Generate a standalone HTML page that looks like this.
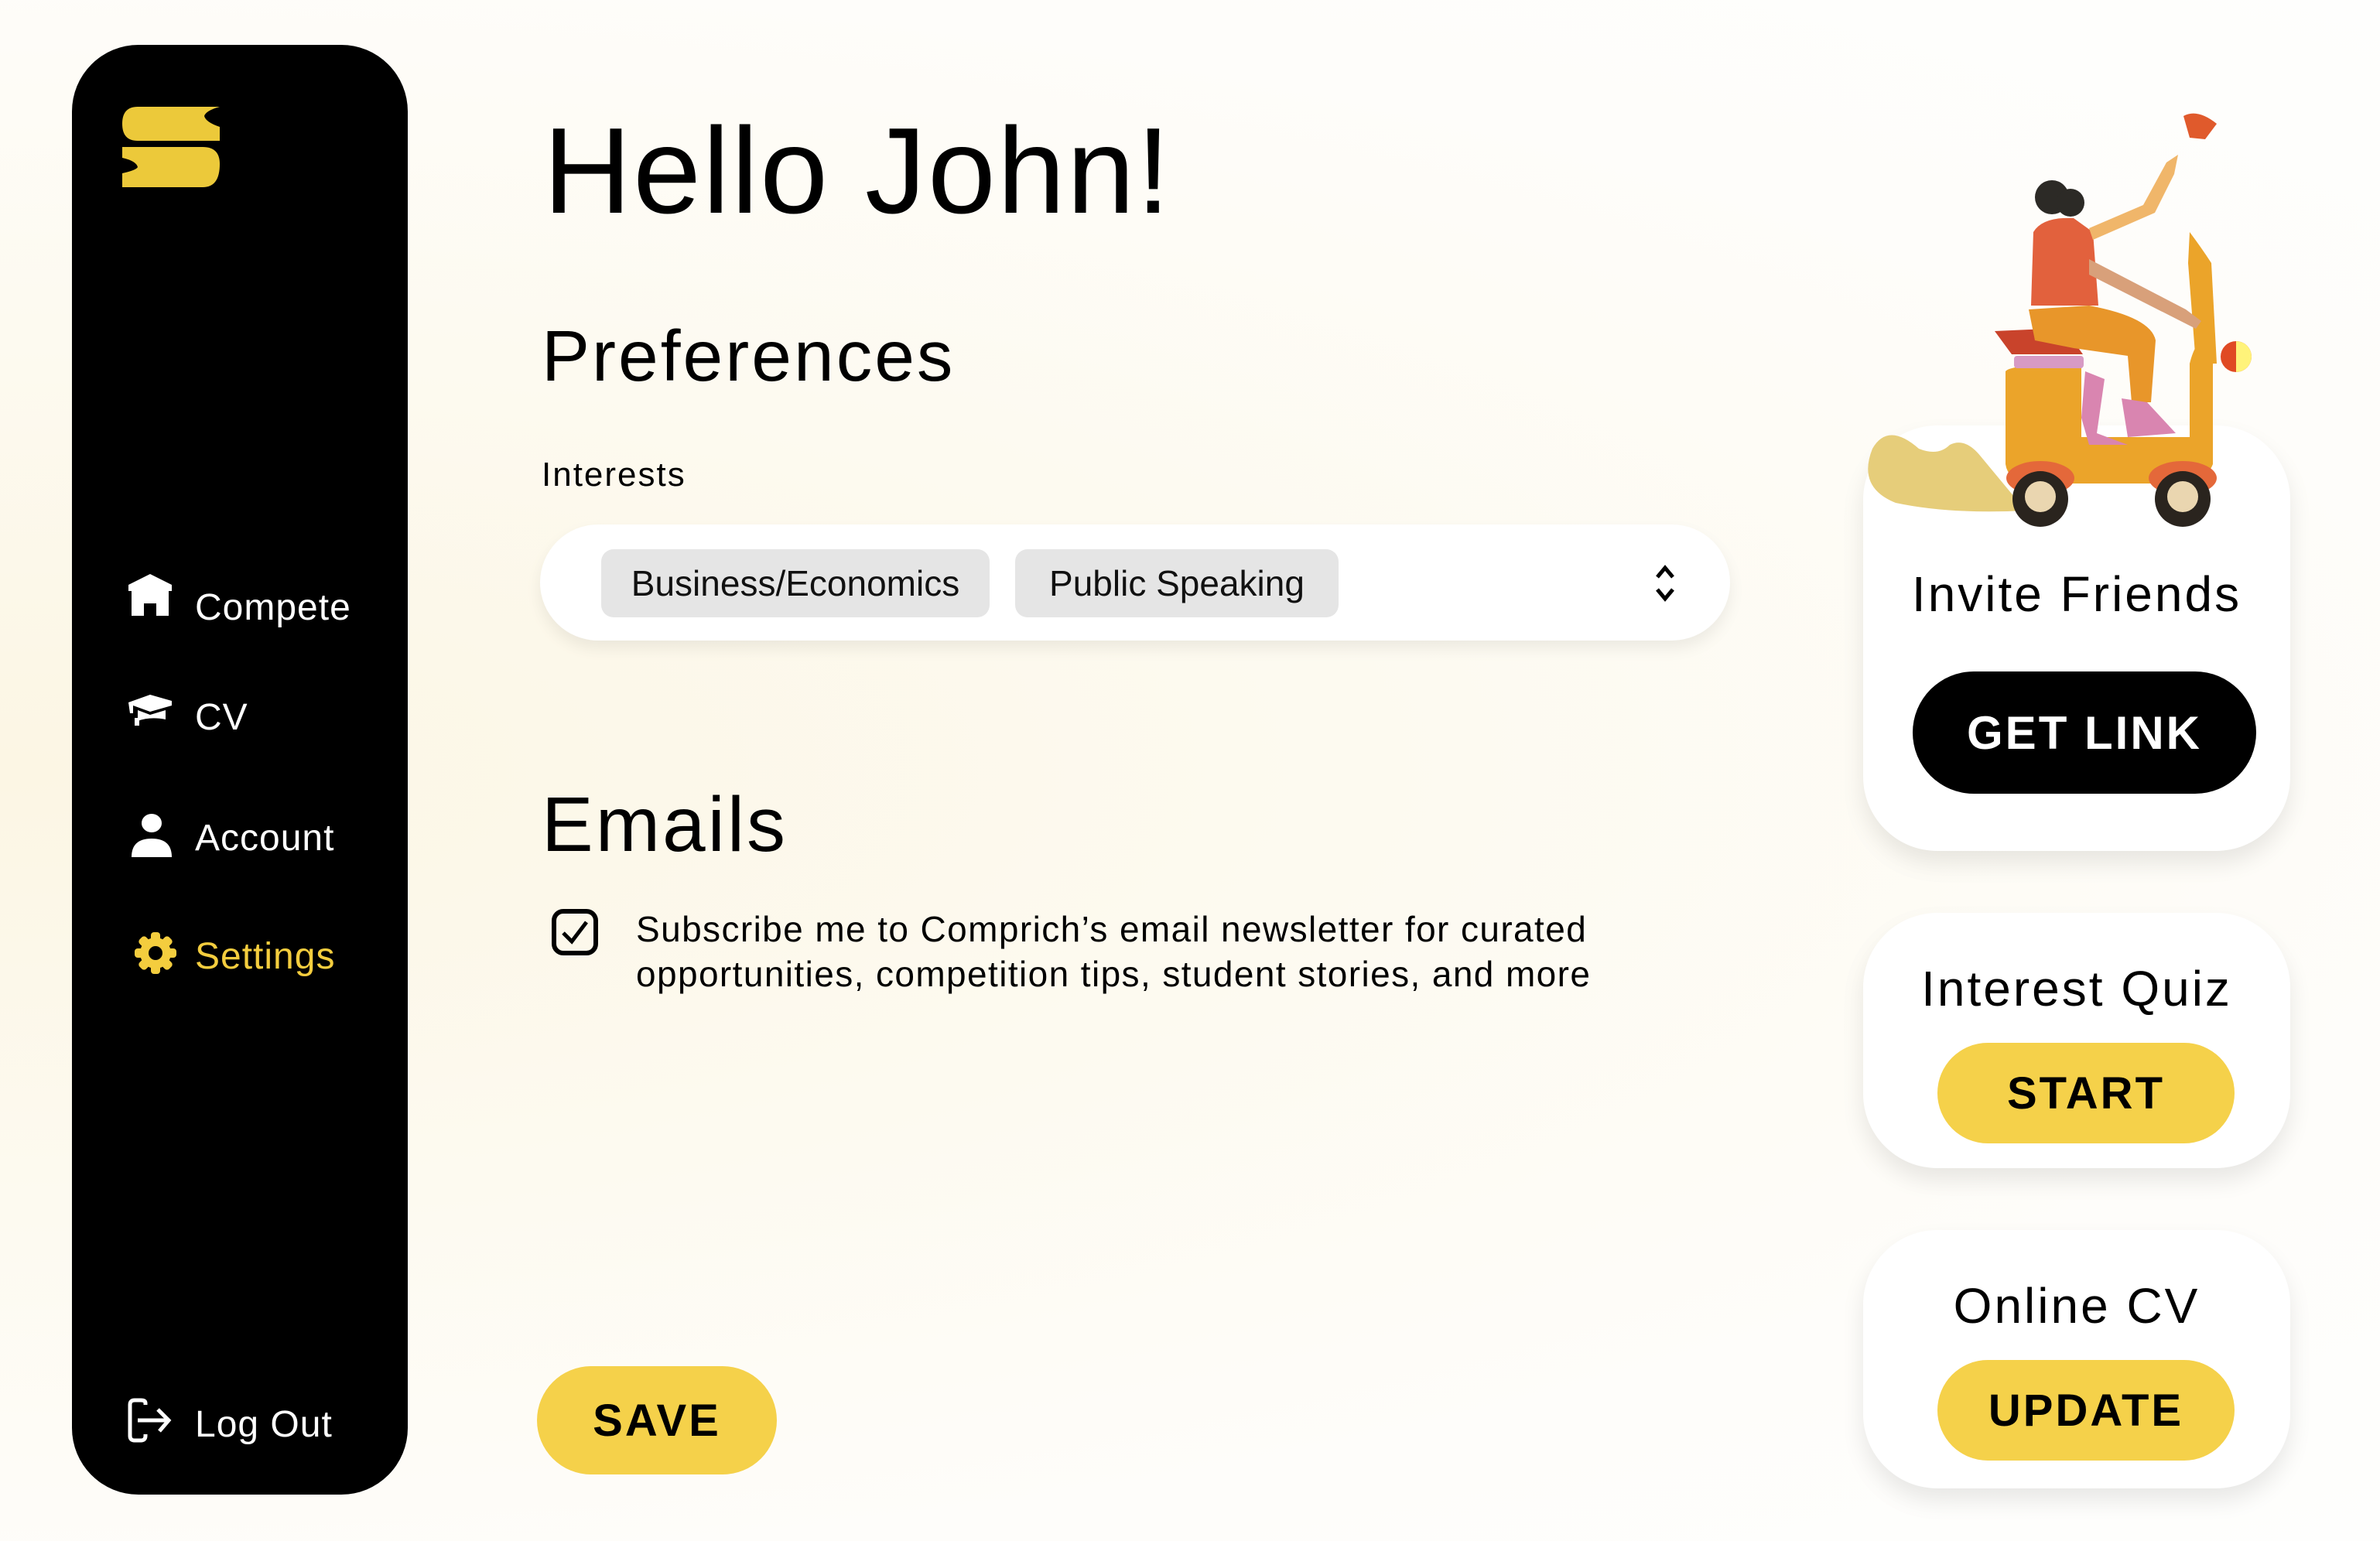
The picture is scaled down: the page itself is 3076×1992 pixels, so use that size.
<!DOCTYPE html>
<html><head><meta charset="utf-8"><style>
*{margin:0;padding:0;box-sizing:border-box}
body{width:3076px;height:1992px;overflow:hidden;position:relative;font-family:"Liberation Sans",sans-serif;color:#000;
background:radial-gradient(ellipse at 0% 50%,#fcf6e4 0%,#fdfaf0 40%,#fefdfa 75%,#fefefd 100%)}
.abs{position:absolute}
.side{left:93px;top:58px;width:434px;height:1874px;background:#000;border-radius:86px}
.nav{position:absolute;left:252px;font-size:48px;color:#fff;letter-spacing:1px;line-height:1}
.ic{position:absolute}
.card{position:absolute;left:2408px;width:552px;background:#fff;border-radius:96px;box-shadow:0 16px 30px rgba(0,0,0,.09)}
.ct{position:absolute;left:0;right:0;text-align:center;font-size:64px;letter-spacing:3px;line-height:1}
.btn{position:absolute;border-radius:90px;display:flex;align-items:center;justify-content:center;font-weight:bold;letter-spacing:3px}
.chip{position:absolute;top:32px;height:88px;background:#e5e5e5;border-radius:16px;font-size:46px;display:flex;align-items:center;justify-content:center;color:#111}
</style></head><body>
<div class="abs side"></div>
<svg class="abs" style="left:158px;top:138px" width="126" height="104" viewBox="0 0 126 104">
<path d="M20 0H126Q108 5 106 12Q108 20 126 26V44H20Q0 44 0 22Q0 0 20 0Z" fill="#ecc93a"/>
<path d="M0 52H104Q126 52 126 74Q126 104 104 104H0V86Q18 82 20 78Q18 70 0 66Z" fill="#ecc93a"/>
</svg>
<svg class="ic" style="left:164px;top:740px" width="60" height="58" viewBox="0 0 60 58"><path d="M30 2L58 16V24H54V56H38V40H22V56H6V24H2V16Z" fill="#fff"/></svg>
<svg class="ic" style="left:164px;top:894px" width="60" height="56" viewBox="0 0 60 56"><path d="M2 14L30 4L58 12L58 18L30 26L8 18V28H4Z" fill="#fff"/><path d="M14 24V38Q30 32 50 36V24L30 30Z" fill="#fff"/><rect x="10" y="34" width="6" height="10" fill="#fff"/></svg>
<svg class="ic" style="left:168px;top:1050px" width="56" height="58" viewBox="0 0 56 58"><ellipse cx="28" cy="14" rx="13" ry="12" fill="#fff"/><path d="M2 58Q2 34 28 34Q54 34 54 58Z" fill="#fff"/></svg>
<svg class="ic" style="left:172px;top:1203px" width="58" height="58" viewBox="0 0 58 58"><g fill="#f4cd3e"><circle cx="29" cy="29" r="20"/><rect x="23" y="2" width="12" height="54" rx="4"/><rect x="2" y="23" width="54" height="12" rx="4"/><rect x="23" y="2" width="12" height="54" rx="4" transform="rotate(45 29 29)"/><rect x="23" y="2" width="12" height="54" rx="4" transform="rotate(-45 29 29)"/></g><circle cx="29" cy="29" r="9" fill="#000"/></svg>
<svg class="ic" style="left:162px;top:1806px" width="64" height="60" viewBox="0 0 64 60"><path d="M26 10V8Q26 4 20 4H12Q6 4 6 10V50Q6 56 12 56H20Q26 56 26 50V48" fill="none" stroke="#fff" stroke-width="5"/><path d="M16 30H54M42 16L56 30L44 44" fill="none" stroke="#fff" stroke-width="5"/></svg>
<div class="nav" style="top:762px">Compete</div>
<div class="nav" style="top:904px">CV</div>
<div class="nav" style="top:1060px">Account</div>
<div class="nav" style="top:1213px;color:#f4cd3e">Settings</div>
<div class="nav" style="top:1818px">Log Out</div>

<div class="abs" style="left:702px;top:142px;font-size:158px;line-height:1;letter-spacing:2px">Hello John!</div>
<div class="abs" style="left:700px;top:414px;font-size:93px;line-height:1;letter-spacing:3px">Preferences</div>
<div class="abs" style="left:700px;top:592px;font-size:44px;line-height:1;letter-spacing:2px">Interests</div>
<div class="abs" style="left:698px;top:678px;width:1538px;height:150px;background:#fff;border-radius:75px;box-shadow:0 10px 20px rgba(0,0,0,.07)">
<div class="chip" style="left:79px;width:502px">Business/Economics</div>
<div class="chip" style="left:614px;width:418px">Public Speaking</div>
<svg class="abs" style="left:1436px;top:48px" width="36" height="56" viewBox="0 0 36 56"><path d="M8 20L18 8L28 20M8 36L18 48L28 36" fill="none" stroke="#000" stroke-width="5"/></svg>
</div>
<div class="abs" style="left:700px;top:1016px;font-size:100px;line-height:1;letter-spacing:3px">Emails</div>
<svg class="abs" style="left:712px;top:1174px" width="62" height="62" viewBox="0 0 62 62"><rect x="4" y="4" width="54" height="54" rx="12" fill="none" stroke="#000" stroke-width="6"/><path d="M16 32L27 43L46 18" fill="none" stroke="#000" stroke-width="5"/></svg>
<div class="abs" style="left:822px;top:1172px;font-size:46px;line-height:58px;letter-spacing:1.4px;width:1500px">Subscribe me to Comprich’s email newsletter for curated<br>opportunities, competition tips, student stories, and more</div>
<div class="btn" style="left:694px;top:1766px;width:310px;height:140px;background:#f5d14a;font-size:58px">SAVE</div>

<div class="card" style="top:550px;height:550px">
<div class="ct" style="top:186px">Invite Friends</div>
<div class="btn" style="left:64px;top:318px;width:444px;height:158px;background:#000;color:#fff;font-size:60px">GET LINK</div>
</div>
<div class="card" style="top:1180px;height:330px">
<div class="ct" style="top:66px">Interest Quiz</div>
<div class="btn" style="left:96px;top:168px;width:384px;height:130px;background:#f5d14a;font-size:58px">START</div>
</div>
<div class="card" style="top:1590px;height:334px">
<div class="ct" style="top:66px">Online CV</div>
<div class="btn" style="left:96px;top:168px;width:384px;height:130px;background:#f5d14a;font-size:58px">UPDATE</div>
</div>

<svg class="abs" style="left:2380px;top:100px" width="640" height="600" viewBox="2380 100 640 600">
<path d="M2420 580Q2440 545 2480 580Q2505 590 2520 575Q2540 565 2560 590L2618 660Q2520 665 2450 650Q2400 630 2420 580Z" fill="#e6cd7a"/>
<path d="M2592 480Q2600 470 2690 472V565H2830V470Q2840 430 2860 440V600Q2850 625 2820 625H2620Q2595 620 2592 600Z" fill="#eba42a"/>
<path d="M2830 300Q2845 320 2858 340L2865 470H2838L2828 340Z" fill="#eba42a"/>
<ellipse cx="2637" cy="618" rx="44" ry="22" fill="#e4683a"/><ellipse cx="2821" cy="618" rx="44" ry="22" fill="#e4683a"/>
<circle cx="2637" cy="645" r="36" fill="#2a241e"/><circle cx="2637" cy="642" r="20" fill="#ead6b0"/>
<circle cx="2821" cy="645" r="36" fill="#2a241e"/><circle cx="2821" cy="642" r="20" fill="#ead6b0"/>
<rect x="2603" y="460" width="90" height="16" rx="4" fill="#d79ac4"/>
<path d="M2578 428L2668 424L2692 458H2600Z" fill="#c9432b"/>
<path d="M2622 400L2700 395Q2780 410 2786 440L2780 520H2755L2750 460L2680 450L2630 440Z" fill="#e8962a"/>
<path d="M2695 480L2720 490L2710 560L2750 575L2700 575L2690 540Z" fill="#d985b0"/>
<path d="M2742 515L2775 520L2812 560L2750 565Z" fill="#d985b0"/>
<path d="M2628 300Q2640 280 2680 282L2705 300L2712 395H2625Z" fill="#e2613d"/>
<path d="M2700 295L2770 265L2800 210L2815 200L2810 225L2785 275L2705 310Z" fill="#f0b66a"/>
<path d="M2700 335L2825 400L2845 415L2838 425L2700 355Z" fill="#d8a07a"/>
<circle cx="2652" cy="255" r="22" fill="#2c2a26"/><circle cx="2676" cy="262" r="18" fill="#2c2a26"/>
<path d="M2822 150Q2840 140 2865 160L2850 180L2830 178Z" fill="#e05a2c"/>
<circle cx="2890" cy="461" r="20" fill="#e04a24"/><path d="M2890 441A20 20 0 0 1 2890 481Z" fill="#fff37a"/>
</svg>
</body></html>
